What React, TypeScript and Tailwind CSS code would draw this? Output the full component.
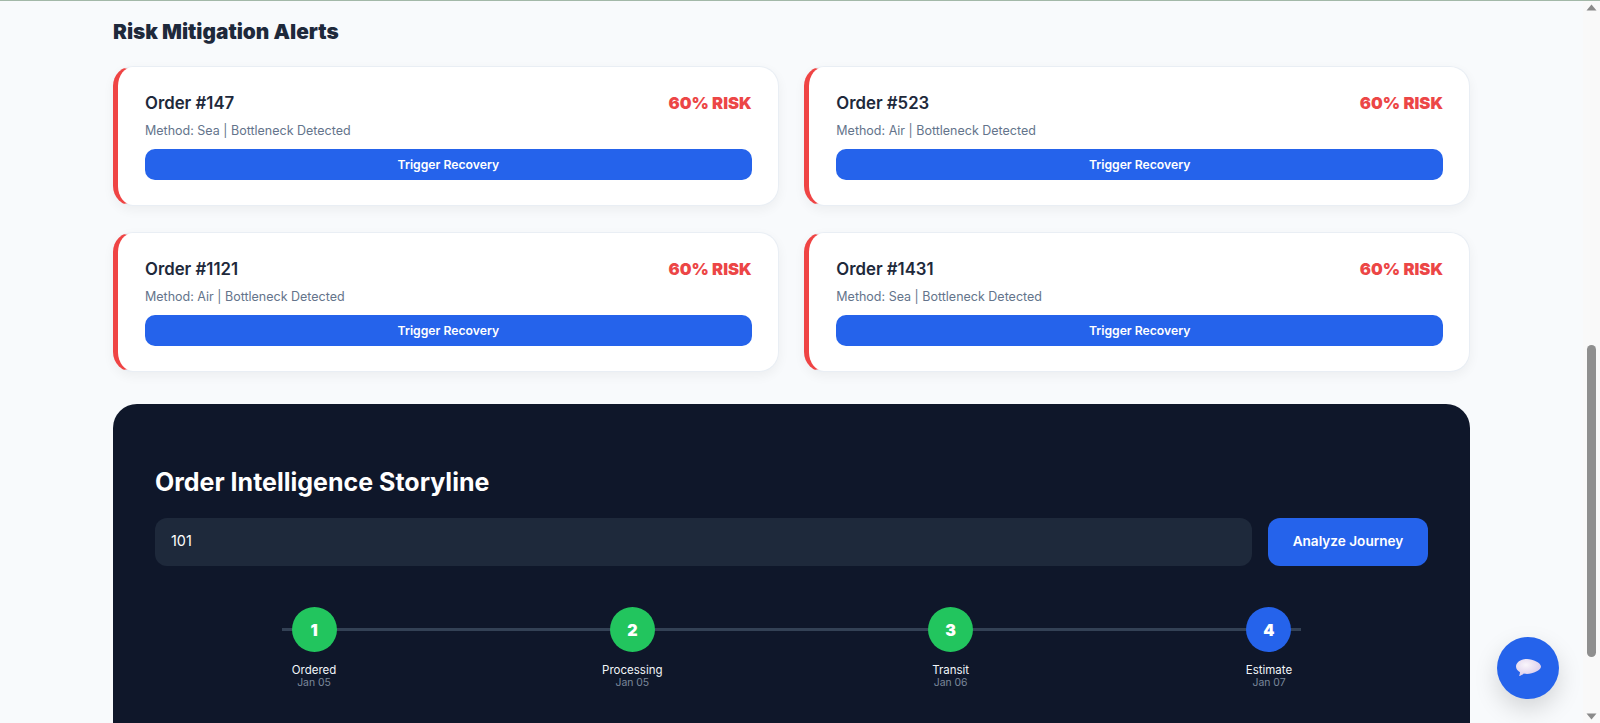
const alerts = [
  { id: 147, method: 'Sea' },
  { id: 523, method: 'Air' },
  { id: 1121, method: 'Air' },
  { id: 1431, method: 'Sea' },
]

const journey = [
  { n: 1, label: 'Ordered', date: 'Jan 05', done: true },
  { n: 2, label: 'Processing', date: 'Jan 05', done: true },
  { n: 3, label: 'Transit', date: 'Jan 06', done: true },
  { n: 4, label: 'Estimate', date: 'Jan 07', done: false },
]

function AlertCard({ id, method }: { id: number; method: string }) {
  return (
    <div className="h-[140px] rounded-[20px] border border-[#e9eef4] border-l-[5px] border-l-[#ef4444] bg-white pl-[27px] pr-[26px] pt-[24px] shadow-[0_4px_12px_rgba(0,0,0,0.05)]">
      <div className="flex items-center justify-between">
        <span className="text-[16.8px] leading-[24px] font-semibold text-[#1e293b]">Order #{id}</span>
        <span className="text-[16.6px] leading-[24px] font-black text-[#ec4646]">60% RISK</span>
      </div>
      <p className="mt-[6px] text-[12.5px] leading-[20px] text-[#64748b]">Method: {method} | Bottleneck Detected</p>
      <button className="mt-[8px] flex h-[31px] w-full items-center justify-center rounded-[10px] bg-[#2563eb] pt-[1px] text-[12.2px] font-semibold text-white">
        Trigger Recovery
      </button>
    </div>
  )
}

function Step({ n, label, date, done }: { n: number; label: string; date: string; done: boolean }) {
  return (
    <div className="relative flex w-[64px] flex-col items-center">
      <div
        className={`flex h-[45px] w-[45px] items-center justify-center rounded-full text-[16px] font-black text-white ${
          done ? 'bg-[#22c55e]' : 'bg-[#2563eb]'
        }`}
      >
        {n}
      </div>
      <span className="mt-[11px] text-[11.5px] leading-[15px] whitespace-nowrap text-[#f1f5f9]">{label}</span>
      <span className="-mt-[1px] text-[10.4px] leading-[12px] whitespace-nowrap text-[#7b889b]">{date}</span>
    </div>
  )
}

function Scrollbar() {
  return (
    <aside className="flex w-[17px] shrink-0 flex-col items-center justify-between bg-[#f9f9f9] pb-[3px] pt-[3px]">
      <svg width="11" height="7" viewBox="0 0 11 7" className="fill-[#8a8a8a]">
        <path d="M5.5 0.5 10.5 6.5H0.5Z" />
      </svg>
      <div className="mb-[56px] mt-auto h-[312px] w-[9px] rounded-full bg-[#8f8f8f]" />
      <svg width="11" height="7" viewBox="0 0 11 7" className="fill-[#8a8a8a]">
        <path d="M5.5 6.5 10.5 0.5H0.5Z" />
      </svg>
    </aside>
  )
}

export default function App() {
  return (
    <div className="relative flex h-screen overflow-hidden border-t border-t-[#a3b8a8] bg-[#f8fafc] font-['Inter',sans-serif]">
      <main className="min-w-0 flex-1 overflow-hidden px-[113px] pt-[17px]">
        <h2 className="text-[20.8px] leading-[28px] font-black text-[#1e293b]">Risk Mitigation Alerts</h2>

        <div className="mt-[20px] grid grid-cols-2 gap-x-[25.6px] gap-y-[26px]">
          {alerts.map((a) => (
            <AlertCard key={a.id} id={a.id} method={a.method} />
          ))}
        </div>

        <section className="mt-[32px] h-[500px] rounded-[24px] bg-[#0f172a] px-[42px] pt-[62px]">
          <h2 className="text-[25px] leading-[32px] font-bold text-white">Order Intelligence Storyline</h2>

          <div className="mt-[20px] flex gap-[16px]">
            <input
              readOnly
              value="101"
              className="h-[48px] min-w-0 flex-1 rounded-[12px] bg-[#1e293b] px-[16px] pb-[3px] text-[14.4px] text-white outline-none"
            />
            <button className="h-[48px] w-[160px] rounded-[12px] bg-[#2563eb] pb-[1px] text-[13.6px] font-semibold text-white">
              Analyze Journey
            </button>
          </div>

          <div className="relative mx-[127px] mt-[41px] flex justify-between">
            <div className="absolute inset-x-0 top-[21px] h-[3px] bg-[#334155]" />
            {journey.map((s) => (
              <Step key={s.n} {...s} />
            ))}
          </div>
        </section>
      </main>

      <Scrollbar />

      <button className="absolute bottom-[24px] right-[41px] flex h-[62px] w-[62px] items-center justify-center rounded-full bg-[#2563eb] shadow-[0_10px_25px_rgba(0,0,0,0.15)]">
        <svg width="28" height="24" viewBox="0 0 28 24">
          <defs>
            <radialGradient id="bubble" cx="0.4" cy="0.35" r="0.8">
              <stop offset="0" stopColor="#faf6fb" />
              <stop offset="1" stopColor="#d5c4e8" />
            </radialGradient>
          </defs>
          <path
            d="M13 3C7 3 2 6.2 2 10.6c0 2.4 1.6 4.4 4 5.7-.1 1.3-.4 2.6-1 3.7 1.8-.3 3.5-1.2 4.8-2.5 1 .3 2.1.4 3.2.4 6 0 14-3.6 14-7.3S19 3 13 3Z"
            fill="url(#bubble)"
          />
        </svg>
      </button>
    </div>
  )
}
